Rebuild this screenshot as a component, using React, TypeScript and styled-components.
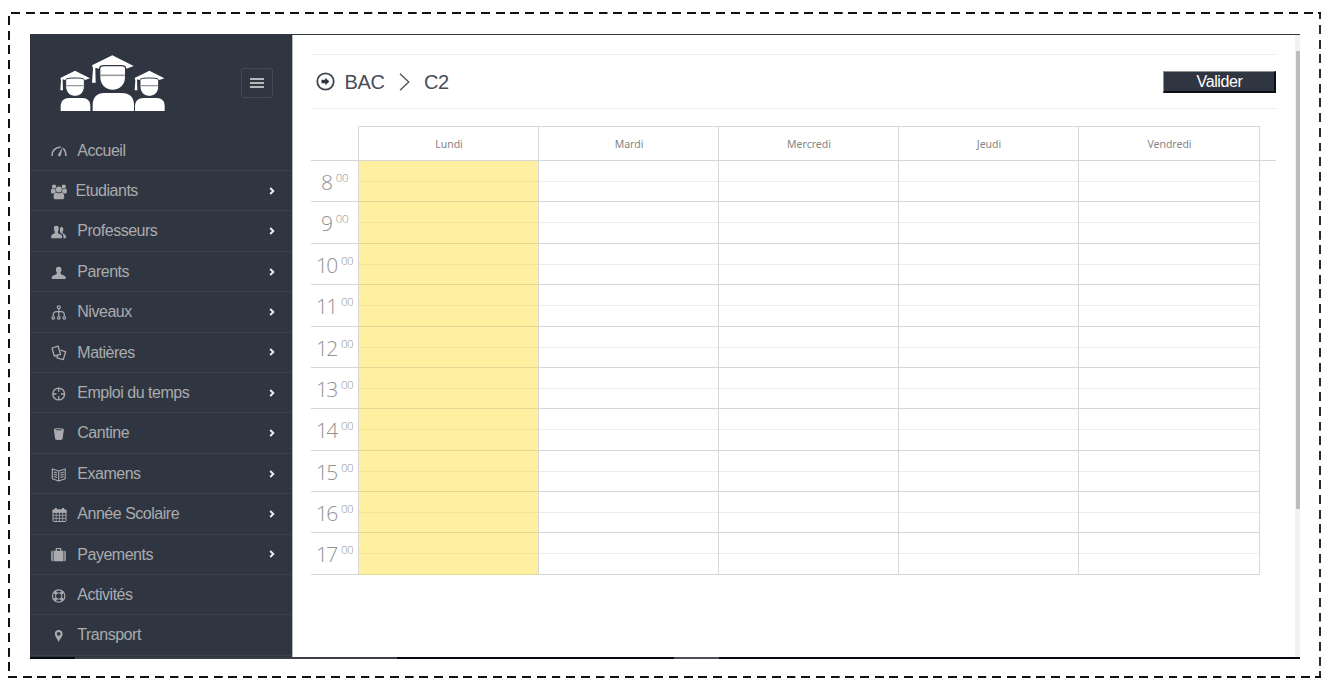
import React from 'react';
import styled, { createGlobalStyle } from 'styled-components';

const Global = createGlobalStyle`
  * { box-sizing: border-box; }
  body { margin: 0; background: #fff; font-family: 'Liberation Sans', Arial, sans-serif; }
`;

const dash = (dir: string, color: string) =>
  `repeating-linear-gradient(${dir}, ${color} 0 8.8px, transparent 9px 14.69px)`;

const Page = styled.div`
  width: 1339px;
  height: 697px;
  padding: 12px 17.5px 19px 8px;
  overflow: hidden;
`;

const DashedFrame = styled.div`
  width: 1314px;
  height: 666px;
  padding: 22px 22px 19px 22px;
  background-image: ${dash('to right', '#111')}, ${dash('to right', '#111')},
    ${dash('to bottom', '#111')}, ${dash('to bottom', '#2a2a2a')},
    linear-gradient(#2a2a2a, #2a2a2a);
  background-repeat: no-repeat;
  background-size: 1310px 2px, 1313px 2px, 2px 657px, 2px 651px, 2px 7px;
  background-position: 2.7px 0, 0.3px 664px, 0 4.3px, 1311px 13px, 1311px 0;
`;

const Window = styled.div`
  width: 1270px;
  height: 625px;
  display: flex;
  flex-direction: column;
  border-top: 1px solid #33363b;
  background: #fff;
`;

const Body = styled.div`
  flex: 1;
  min-height: 0;
  display: flex;
`;

const Taskbar = styled.div`
  height: 2px;
  background: linear-gradient(
    to right,
    #080b14 0 45px,
    #3c4046 45px 367px,
    #06090f 367px 644px,
    #4b5056 644px 689px,
    #06090f 689px
  );
`;

const Sidebar = styled.aside`
  width: 263px;
  background: #303641;
  border-right: 1px solid #b5b7bb;
  overflow: hidden;
`;

const Brand = styled.div`
  height: 95.6px;
  display: flex;
  align-items: flex-start;
  justify-content: space-between;
  padding: 20px 19px 0 30px;
`;

const MenuButton = styled.button`
  width: 32px;
  height: 30px;
  margin-top: 13px;
  padding: 0;
  display: flex;
  align-items: center;
  justify-content: center;
  background: transparent;
  border: 1px solid #454a54;
  border-radius: 3px;
`;

const Item = styled.a`
  height: 40.42px;
  display: flex;
  align-items: center;
  padding: 0 17px 0 21px;
  border-bottom: 1px solid #3b424e;
  color: #aaabae;
  font-size: 16px;
  letter-spacing: -0.48px;
`;

const ItemIcon = styled.svg`
  flex: none;
  width: 16px;
  height: 16px;
  margin-top: 2px;
  overflow: visible;
`;

const ItemLabel = styled.span<{ $tight?: boolean }>`
  flex: 1;
  margin-left: ${(p) => (p.$tight ? 8.5 : 10.3)}px;
  padding-top: 0.6px;
  white-space: nowrap;
`;

const Main = styled.main`
  flex: 1;
  padding: 19px 19px 0 18px;
`;

const TitleBar = styled.header`
  height: 55px;
  display: flex;
  align-items: center;
  justify-content: space-between;
  border-top: 1px solid #eee;
  border-bottom: 1px solid #eee;
`;

const Crumbs = styled.div`
  display: flex;
  align-items: center;
  padding-left: 4.5px;
  color: #484d57;
  font-size: 20px;
  letter-spacing: -0.4px;
  line-height: 24px;
`;

const Crumb = styled.span`
  margin: 0 15px 0 10px;
`;

const LastCrumb = styled.span`
  margin-left: 13.5px;
`;

const Validate = styled.button`
  width: 113px;
  height: 22px;
  padding: 0;
  border: 2px solid;
  border-width: 1px 2px 2px 1px;
  border-color: #8b8f96 #0c0e12 #0c0e12 #8b8f96;
  background: #303641;
  color: #fff;
  font: 16px/17px 'Liberation Sans', Arial, sans-serif;
  letter-spacing: -0.4px;
  text-indent: 1px;
`;

const Calendar = styled.section`
  margin-top: 17px;
`;

const DayHeader = styled.div`
  height: 35px;
  display: flex;
  padding: 0 16px 0 47px;
  border-bottom: 1px solid #d6d6d6;
`;

const Days = styled.div`
  flex: 1;
  display: grid;
  grid-template-columns: repeat(4, 180px) 181px;
  border: solid #d8d8d8;
  border-width: 1px 0 0 1px;
`;

const Day = styled.div`
  height: 33px;
  padding-left: 1px;
  border-right: 1px solid #d8d8d8;
  color: #858585;
  font: 10.5px/35px 'Noto Sans', 'Open Sans', sans-serif;
  text-align: center;
`;

const HourRow = styled.div`
  width: 949px;
  height: 41.38px;
  display: flex;
  border-bottom: 1px solid #d6d6d6;
`;

const HourLabel = styled.div`
  width: 47px;
  display: flex;
  align-items: flex-start;
  justify-content: center;
  color: #929292;
  font: 300 21px/42px 'Open Sans', 'Noto Sans', sans-serif;
  font-stretch: 91%;
  letter-spacing: -1.7px;
`;

const Minutes = styled.sup`
  margin: 3px 0 0 4.5px;
  font-size: 11.5px;
  line-height: 28px;
  letter-spacing: -0.5px;
  color: #949494;
`;

const Slots = styled.div`
  display: grid;
  grid-template-columns: repeat(4, 180px) 181px;
  border-left: 1px solid #d8d8d8;
`;

const Slot = styled.div<{ $today?: boolean }>`
  /* the row border stays visible through the highlighted column */
  height: 41.38px;
  border-right: 1px solid #d8d8d8;
  background: ${(p) => (p.$today ? '#fef0a0' : 'transparent')};
  border-bottom: 1px solid ${(p) => (p.$today ? '#e3d895' : '#d6d6d6')};
`;

const HalfSlot = styled.div<{ $today?: boolean }>`
  height: 21px;
  border-bottom: 1px solid ${(p) => (p.$today ? '#f2e498' : '#ececec')};
`;

const ScrollTrack = styled.div`
  width: 5px;
  padding: 16px 0 0 1px;
  background: #f1f1f1;
`;

const ScrollThumb = styled.div`
  height: 458px;
  background: #bcbcbc;
`;

const S = { fill: 'none', stroke: 'currentColor' };
const F = { fill: 'currentColor' };

const icons: Record<string, React.ReactNode> = {
  gauge: (
    <g {...S} strokeWidth="1.5">
      <path d="M1 13C1 7.500 4.500 4.300 9.800 3.900" />
      <path d="M12.300 5.200C14 7 14.900 9.600 14.900 13" />
      <path {...F} stroke="none" d="M11.900 3.600L9.700 12.200C9.200 13.800 6.600 13.300 7.200 11.400Z" />
    </g>
  ),
  group: (
    <g {...F}>
      <circle cx="3" cy="2.700" r="2.100" />
      <circle cx="12.800" cy="2.700" r="2.100" />
      <path d="M0 8V6.500C0 5.300.700 4.700 1.600 4.900C3 5.500 4 5.100 4.600 4.900C4.300 6.200 4.500 7.200 5 8.200C3.900 8.300 3.200 8.900 2.700 9.500H1.600C.600 9.500 0 9 0 8Z" />
      <path d="M15.800 8V6.500C15.800 5.300 15.100 4.700 14.200 4.900C12.800 5.500 11.800 5.100 11.200 4.900C11.500 6.200 11.300 7.200 10.800 8.200C11.900 8.300 12.600 8.900 13.100 9.500H14.200C15.200 9.500 15.800 9 15.800 8Z" />
      <circle cx="7.900" cy="5.600" r="3" />
      <path d="M2.600 13.200C2.600 10.500 3.300 8.600 5 8.600C6.200 9.600 9.600 9.600 10.800 8.600C12.500 8.600 13.200 10.500 13.200 13.200C13.200 14.600 12.400 15.200 11.200 15.200H4.600C3.400 15.200 2.600 14.600 2.600 13.200Z" />
    </g>
  ),
  users: (
    <g {...F}>
      <path d="M5.300 1.800C7.200 1.800 7.900 3 7.700 5C7.600 6.200 7 7 6.900 7.700V9C8.600 10.200 10.900 10.500 11 12V14.200H.200V12C.300 10.500 2.700 10 3.800 9V7.700C3.500 7 3 6.200 2.900 5C2.700 3 3.400 1.800 5.300 1.800Z" />
      <path d="M9.600 3.200C11.400 2.600 12.600 3.700 12.300 5.700C12.200 6.700 11.700 7.300 11.600 8V9.200C13 10.100 14.800 10.600 14.900 12.300V14.200H12.400V12C12.200 10.200 10.200 9.300 9.200 8.500C9 7.500 8.800 7 8.900 6C9.100 5 9 4 9.600 3.200Z" />
    </g>
  ),
  user: (
    <path {...F} d="M7.700 1.800C9.900 1.800 10.700 3.200 10.500 5.200C10.300 6.300 9.900 6.800 9.600 7.500V8.800C11.200 10.300 14.300 10.300 14.600 12.200V13.900H.800V12.200C1.100 10.300 4.200 10.300 5.800 8.800V7.500C5.500 6.800 5.100 6.300 4.900 5.200C4.700 3.200 5.500 1.800 7.700 1.800Z" />
  ),
  tree: (
    <g {...S} strokeWidth="1.200">
      <circle cx="7.800" cy="2.300" r="1.500" />
      <path d="M7.800 4V11.300M2.300 11.300V9.500C2.300 7.200 3.500 6.600 5.500 6.600H10C12.200 6.600 13.300 7.200 13.300 9.500V11.300" />
      <circle cx="2.300" cy="12.800" r="1.300" />
      <circle cx="7.800" cy="12.800" r="1.300" />
      <circle cx="13.300" cy="12.800" r="1.300" />
    </g>
  ),
  docs: (
    <g {...S} strokeWidth="1.300" strokeLinejoin="round">
      <path d="M1 3L7.200 1.200L9.500 9.300L3.300 11Z" />
      <path d="M9.600 5.200L14.600 6.700L12.300 14.600L6 12.800L6.300 11" />
    </g>
  ),
  target: (
    <g {...S} strokeWidth="1.300">
      <circle cx="7.700" cy="8" r="5.900" />
      <path d="M7.700 2V5.700M7.700 10.300V14M1.800 8H5.400M10 8H13.600" />
    </g>
  ),
  cup: (
    <g {...F}>
      <path fillRule="evenodd" d="M2.800 3.400C3 1.800 12.700 1.800 12.900 3.400L11.500 13C11.300 14.300 4.400 14.300 4.200 13ZM4.300 3.700C5.200 4.400 10.500 4.400 11.400 3.700C10.500 3.100 5.200 3.100 4.300 3.700Z" />
    </g>
  ),
  book: (
    <g {...S} strokeWidth="1.100" strokeLinejoin="round">
      <path d="M7.700 4L1.300 1.900V11.700L7.700 14L14.200 11.700V1.900ZM7.700 4V14" />
      <path d="M2.800 5L6 6.100M2.800 7.200L6 8.300M2.800 9.400L6 10.500M12.700 5L9.500 6.100M12.700 7.200L9.500 8.300M12.700 9.400L9.500 10.500" />
    </g>
  ),
  calendar: (
    <g {...S} strokeWidth="1">
      <rect x="2" y="3" width="13" height="11.500" rx="1" />
      <path {...F} d="M2 3H15V5.300H2Z" />
      <path strokeWidth="2" d="M4.800 1V4.500M12 1V4.500" />
      <path strokeWidth=".8" d="M2 8.300H15M2 11.400H15M5.200 5V14.500M8.500 5V14.500M11.700 5V14.500" />
    </g>
  ),
  suitcase: (
    <g {...F}>
      <path d="M.200 5C.200 4.200.700 3.700 1.700 3.700V14.300C.700 14.300.200 13.800.200 13ZM14.800 5C14.800 4.200 14.300 3.700 13.300 3.700V14.300C14.300 14.300 14.800 13.800 14.800 13Z" />
      <path fillRule="evenodd" d="M2.500 3.700H4.600V2.300C4.600 1.400 5.200.900 6 .900H9C9.800.900 10.400 1.400 10.400 2.300V3.700H12.500V14.300H2.500ZM5.900 3.700H9.100V2.100H5.900Z" />
    </g>
  ),
  ring: (
    <g {...S}>
      <circle cx="7.700" cy="8" r="6.200" strokeWidth="1.200" />
      <circle cx="7.700" cy="8" r="3.200" strokeWidth="1" />
      <path strokeWidth="3" d="M3.500 3.800L5.500 5.800M9.900 10.200L11.900 12.200M11.900 3.800L9.900 5.800M5.500 10.200L3.500 12.200" />
    </g>
  ),
  pin: (
    <path {...F} fillRule="evenodd" d="M7.700 2C10 2 11.600 3.600 11.600 5.900C11.600 8.500 9 10.500 7.700 14C6.400 10.500 3.800 8.500 3.800 5.900C3.800 3.600 5.400 2 7.700 2ZM7.700 3.900A1.900 1.900 0 1 0 7.700 7.700A1.900 1.900 0 1 0 7.700 3.900Z" />
  ),
};

const menu = [
  { label: 'Accueil', icon: 'gauge', leaf: true },
  { label: 'Etudiants', icon: 'group' },
  { label: 'Professeurs', icon: 'users' },
  { label: 'Parents', icon: 'user' },
  { label: 'Niveaux', icon: 'tree' },
  { label: 'Matières', icon: 'docs' },
  { label: 'Emploi du temps', icon: 'target' },
  { label: 'Cantine', icon: 'cup' },
  { label: 'Examens', icon: 'book' },
  { label: 'Année Scolaire', icon: 'calendar' },
  { label: 'Payements', icon: 'suitcase' },
  { label: 'Activités', icon: 'ring', leaf: true },
  { label: 'Transport', icon: 'pin', leaf: true },
];

const days = ['Lundi', 'Mardi', 'Mercredi', 'Jeudi', 'Vendredi'];
const hours = [8, 9, 10, 11, 12, 13, 14, 15, 16, 17];

const SideGraduate = ({ dx = 0 }: { dx?: number }) => (
  <g transform={`translate(${dx} 0)`} fill="#fff">
    <path d="M182 332V318C182 301 193 293 207 293H247C262 293 271 302 271 318V332Z" />
    <path d="M181 233L225 211L270 234L253 240H197L188 237L189 270H181L183 240Z" />
    <path
      d="M197 238Q199 233 225 233T253 238V258C253 276 241 288 225 288S197 276 197 258Z"
      stroke="#303641"
      strokeWidth="3"
    />
    <path d="M199 256H251" stroke="#9b9da2" strokeWidth="4" />
  </g>
);

const Logo = () => (
  <svg width="106" height="57" viewBox="180 164 318 171">
    <SideGraduate />
    <SideGraduate dx={223} />
    <g fill="#fff">
      <path d="M278 332V314C278 290 292 278 312 278H364C389 278 402 291 402 314V332Z" />
      <path d="M276 195L337 165L401 197L377 206H299L286 202L287 247H276L279 204Z" />
      <path
        d="M299 204Q300 196 312 196H364Q376 196 377 204V230C377 255 360 270 338 270S299 255 299 230Z"
        stroke="#303641"
        strokeWidth="4"
      />
      <path d="M301 225H375" stroke="#9b9da2" strokeWidth="5" />
    </g>
  </svg>
);

export default function App() {
  return (
    <Page>
      <Global />
      <DashedFrame>
        <Window>
          <Body>
            <Sidebar>
              <Brand>
                <Logo />
                <MenuButton aria-label="Menu">
                  <svg width="14" height="12" viewBox="0 0 14 12">
                    <path d="M0 2H14M0 6H14M0 10H14" stroke="#b4b6b9" strokeWidth="2" />
                  </svg>
                </MenuButton>
              </Brand>
              {menu.map((m) => (
                <Item key={m.label}>
                  <ItemIcon viewBox="0 0 16 16">{icons[m.icon]}</ItemIcon>
                  <ItemLabel $tight={m.icon === 'group'}>{m.label}</ItemLabel>
                  {!m.leaf && (
                    <svg width="6" height="8" viewBox="0 0 6 8">
                      <path d="M1.200 1L4.300 4L1.200 7" fill="none" stroke="#f0f0f0" strokeWidth="1.900" />
                    </svg>
                  )}
                </Item>
              ))}
            </Sidebar>
            <Main>
              <TitleBar>
                <Crumbs>
                  <svg width="19" height="19" viewBox="0 0 19 19">
                    <circle cx="9.500" cy="9.500" r="8.200" fill="none" stroke="#3f454f" strokeWidth="1.800" />
                    <path d="M5.500 7.800H9.300V5.800L13.400 9.500L9.300 13.200V11.200H5.500Z" fill="#303641" />
                  </svg>
                  <Crumb>BAC</Crumb>
                  <svg width="11" height="18" viewBox="0 0 11 18">
                    <path d="M1 .700L9.800 9L1 17.300" fill="none" stroke="#4a4f58" strokeWidth="1.300" />
                  </svg>
                  <LastCrumb>C2</LastCrumb>
                </Crumbs>
                <Validate>Valider</Validate>
              </TitleBar>
              <Calendar>
                <DayHeader>
                  <Days>
                    {days.map((d) => (
                      <Day key={d}>{d}</Day>
                    ))}
                  </Days>
                </DayHeader>
                {hours.map((h) => (
                  <HourRow key={h}>
                    <HourLabel>
                      {h}
                      <Minutes>00</Minutes>
                    </HourLabel>
                    <Slots>
                      {days.map((d, i) => (
                        <Slot key={d} $today={i === 0}>
                          <HalfSlot $today={i === 0} />
                        </Slot>
                      ))}
                    </Slots>
                  </HourRow>
                ))}
              </Calendar>
            </Main>
            <ScrollTrack>
              <ScrollThumb />
            </ScrollTrack>
          </Body>
          <Taskbar />
        </Window>
      </DashedFrame>
    </Page>
  );
}
